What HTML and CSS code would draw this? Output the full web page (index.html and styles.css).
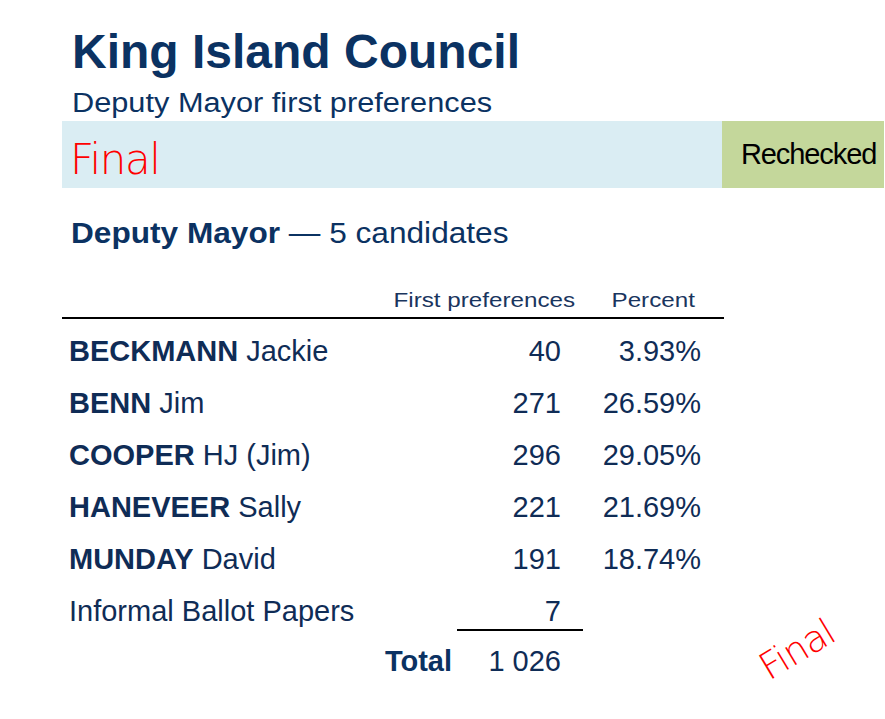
FILE: index.html
```html
<!DOCTYPE html>
<html>
<head>
<meta charset="utf-8">
<link rel="stylesheet" href="styles.css">
</head>
<body>
<div class="page">
  <h1 class="title">King Island Council</h1>
  <div class="subtitle"><span class="wide">Deputy Mayor first preferences</span></div>
  <div class="band">
    <div class="band-status">Final</div>
    <div class="band-check">Rechecked</div>
  </div>
  <h2 class="section"><span class="wide-s"><b>Deputy Mayor</b> — 5 candidates</span></h2>
  <div class="results">
    <div class="head">
      <span class="h-num"><span class="wide-h">First preferences</span></span>
      <span class="h-pct"><span class="wide-h">Percent</span></span>
    </div>
    <div class="rows">
      <div class="row"><span class="name"><b>BECKMANN</b> Jackie</span><span class="num">40</span><span class="pct">3.93%</span></div>
      <div class="row"><span class="name"><b>BENN</b> Jim</span><span class="num">271</span><span class="pct">26.59%</span></div>
      <div class="row"><span class="name"><b>COOPER</b> HJ (Jim)</span><span class="num">296</span><span class="pct">29.05%</span></div>
      <div class="row"><span class="name"><b>HANEVEER</b> Sally</span><span class="num">221</span><span class="pct">21.69%</span></div>
      <div class="row"><span class="name"><b>MUNDAY</b> David</span><span class="num">191</span><span class="pct">18.74%</span></div>
      <div class="row informal"><span class="name">Informal Ballot Papers</span><span class="num">7</span><span class="pct"></span></div>
      <div class="row total"><span class="total-label">Total</span><span class="num">1 026</span><span class="pct"></span></div>
    </div>
  </div>
  <div class="stamp">Final</div>
</div>
</body>
</html>
```
FILE: styles.css
```css
html, body {
  margin: 0;
  padding: 0;
  background: #ffffff;
}
body {
  width: 885px;
  height: 719px;
  overflow: hidden;
  font-family: "Liberation Sans", Arial, sans-serif;
  color: #0d3163;
}
.page {
  position: relative;
  padding: 27px 0 0 62px;
}
.title {
  margin: 0 0 0 10px;
  font-size: 48px;
  line-height: 50px;
  font-weight: bold;
  color: #0b3262;
}
.subtitle {
  margin: 9px 0 0 10px;
  font-size: 27px;
  line-height: 34px;
  color: #0b3262;
  white-space: nowrap;
}
.wide {
  display: inline-block;
  transform: scaleX(1.138);
  transform-origin: 0 50%;
}
.band {
  display: flex;
  height: 67px;
  width: 822px;
  margin-top: 1px;
}
.band-status {
  flex: 0 0 660px;
  background: #daedf3;
  color: #ff0000;
  font-family: "DejaVu Sans", sans-serif;
  font-weight: 200;
  font-size: 42px;
  line-height: 57px;
  padding: 10px 0 0 8px;
  box-sizing: border-box;
  letter-spacing: -1.5px;
}
.band-check {
  flex: 1;
  background: #c4d79b;
  color: #000;
  font-size: 29px;
  line-height: 67px;
  letter-spacing: -1.1px;
  padding-left: 19px;
  white-space: nowrap;
}
.section {
  margin: 27px 0 0 9px;
  font-size: 29px;
  line-height: 36px;
  font-weight: normal;
  color: #0b3262;
  white-space: nowrap;
}
.wide-s {
  display: inline-block;
  transform: scaleX(1.09);
  transform-origin: 0 50%;
}
.section b { font-weight: bold; }
.results {
  width: 662px;
  margin-top: 37px;
}
.head {
  display: flex;
  font-size: 20px;
  line-height: 24px;
  color: #1a355e;
  border-bottom: 2px solid #000;
  padding-bottom: 5px;
  white-space: nowrap;
}
.h-num {
  flex: 0 0 513px;
  text-align: right;
}
.h-pct {
  flex: 0 0 120px;
  text-align: right;
}
.wide-h {
  display: inline-block;
  transform: scaleX(1.21);
  transform-origin: 100% 50%;
}
.rows {
  padding-top: 6px;
}
.row {
  display: grid;
  grid-template-columns: 395px 104px 140px 23px;
  font-size: 29px;
  line-height: 52px;
  color: #0f2c56;
  white-space: nowrap;
}
.name { padding-left: 7px; }
.num { text-align: right; }
.pct { text-align: right; }
.informal { height: 46px; }
.informal .num {
  height: 44px;
  border-bottom: 2px solid #000;
  padding-right: 22px;
  margin-right: -22px;
}
.total { line-height: 60px; }
.total-label {
  font-weight: bold;
  text-align: right;
  padding-right: 5px;
  color: #0b3262;
}
.stamp {
  position: absolute;
  left: 769px;
  top: 651px;
  color: #ff0000;
  font-family: "DejaVu Sans", sans-serif;
  font-weight: 200;
  font-size: 37px;
  line-height: 36px;
  letter-spacing: -1px;
  transform: rotate(-31deg);
  transform-origin: 0 30px;
}
```
